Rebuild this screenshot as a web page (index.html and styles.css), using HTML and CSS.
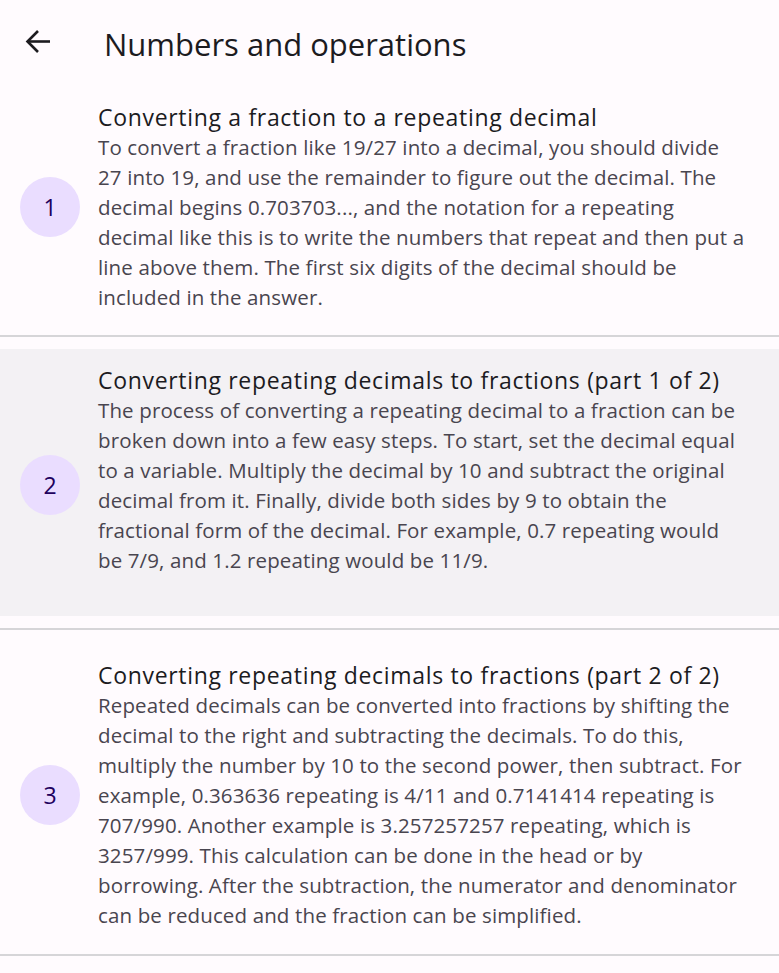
FILE: index.html
```html
<!DOCTYPE html>
<html lang="en">
<head>
<meta charset="utf-8">
<title>Numbers and operations</title>
<link rel="stylesheet" href="styles.css">
</head>
<body>
<header class="topbar">
  <button class="back" aria-label="Back">
    <svg width="26" height="26" viewBox="0 0 26 26" fill="none" stroke="#1c1b1f" stroke-width="2.6" stroke-linecap="butt" stroke-linejoin="miter">
      <path d="M25 12.5H2.5"/>
      <path d="M13 2L2.5 12.5 13 23"/>
    </svg>
  </button>
  <h1 class="title">Numbers and operations</h1>
</header>
<ul class="list">
  <li class="item">
    <div class="item-inner">
      <div class="badge">1</div>
      <div class="text">
        <div class="item-title">Converting a fraction to a repeating decimal</div>
        <p class="item-body">To convert a fraction like 19/27 into a decimal, you should divide 27 into 19, and use the remainder to figure out the decimal. The decimal begins 0.703703..., and the notation for a repeating decimal like this is to write the numbers that repeat and then put a line above them. The first six digits of the decimal should be included in the answer.</p>
      </div>
    </div>
  </li>
  <li class="item">
    <div class="item-inner is-active">
      <div class="badge">2</div>
      <div class="text text-extra">
        <div class="item-title">Converting repeating decimals to fractions (part 1 of 2)</div>
        <p class="item-body">The process of converting a repeating decimal to a fraction can be broken down into a few easy steps. To start, set the decimal equal to a variable. Multiply the decimal by 10 and subtract the original decimal from it. Finally, divide both sides by 9 to obtain the fractional form of the decimal. For example, 0.7 repeating would be 7/9, and 1.2 repeating would be 11/9.</p>
      </div>
    </div>
  </li>
  <li class="item">
    <div class="item-inner">
      <div class="badge">3</div>
      <div class="text">
        <div class="item-title">Converting repeating decimals to fractions (part 2 of 2)</div>
        <p class="item-body">Repeated decimals can be converted into fractions by shifting the decimal to the right and subtracting the decimals. To do this, multiply the number by 10 to the second power, then subtract. For example, 0.363636 repeating is 4/11 and 0.7141414 repeating is 707/990. Another example is 3.257257257 repeating, which is 3257/999. This calculation can be done in the head or by borrowing. After the subtraction, the numerator and denominator can be reduced and the fraction can be simplified.</p>
      </div>
    </div>
  </li>
</ul>
</body>
</html>
```
FILE: styles.css
```css
* { box-sizing: border-box; }
html, body {
  margin: 0;
  padding: 0;
  background: #fffbfe;
  font-family: "Open Sans", "Noto Sans", sans-serif;
}
.topbar {
  height: 74px;
  display: flex;
  align-items: flex-start;
}
.back {
  flex: none;
  width: 78px;
  height: 48px;
  margin-top: 18px;
  display: flex;
  align-items: center;
  padding: 0 0 0 25px;
  border: 0;
  background: transparent;
}
.title {
  margin: 24px 0 0 26px;
  font-size: 31px;
  font-weight: 400;
  color: #1c1b1f;
  line-height: 40px;
}
.list {
  list-style: none;
  margin: 0;
  padding: 0;
}
.item {
  padding: 12px 0;
  border-bottom: 2px solid #d6d5d8;
}
.item:last-child .item-inner {
  padding-top: 18px;
  padding-bottom: 12px;
}
.item-inner {
  display: flex;
  align-items: center;
  gap: 18px;
  padding: 16px 33px 11px 20px;
}
.item-inner.is-active {
  background: #f3f1f4;
}
.text-extra {
  padding-bottom: 30px;
}
.badge {
  flex: none;
  width: 60px;
  height: 60px;
  border-radius: 50%;
  background: #eaddff;
  color: #21005d;
  font-size: 23px;
  font-weight: 500;
  display: flex;
  align-items: center;
  justify-content: center;
}
.text { flex: 1; min-width: 0; }
.item-title {
  font-size: 23px;
  letter-spacing: 0.68px;
  line-height: 30px;
  color: #1c1b1f;
}
.item-body {
  margin: 0;
  font-size: 20.5px;
  letter-spacing: 0.13px;
  line-height: 30px;
  color: #49454f;
}
```
